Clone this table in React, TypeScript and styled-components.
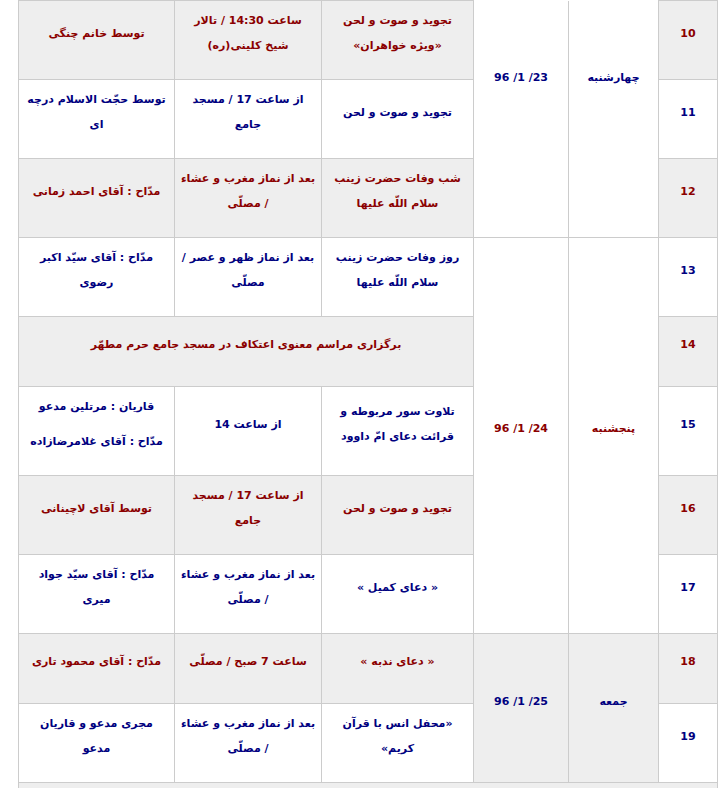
import React from 'react';
import styled, { createGlobalStyle } from 'styled-components';

const GlobalStyle = createGlobalStyle`
  html, body {
    margin: 0;
    padding: 0;
    background: #ffffff;
  }
  body {
    font-family: "DejaVu Sans", sans-serif;
  }
`;

type Tone = 'red' | 'blue';

const Page = styled.div`
  padding: 0 1px 0 18px;
`;

const Table = styled.table`
  width: 699px;
  table-layout: fixed;
  border-collapse: collapse;
  direction: rtl;
  font-family: "DejaVu Sans", Tahoma, sans-serif;
  font-size: 11px;
  font-weight: bold;
`;

const Row = styled.tr`
  height: 70px;
`;

const Cell = styled.td<{ $shade: boolean; $tone: Tone; $carried?: boolean }>`
  border: 1px solid #cccccc;
  ${(p) => (p.$carried ? 'border-top: none;' : '')}
  padding: 7px 4px ${(p) => (p.$carried ? '75px' : '7px')};
  text-align: center;
  vertical-align: middle;
  line-height: 25px;
  white-space: nowrap;
  background: ${(p) => (p.$shade ? '#eeeeee' : '#ffffff')};
  color: ${(p) => (p.$tone === 'red' ? '#8b0000' : '#000080')};
`;

const Para = styled.p<{ $gap?: number }>`
  margin: 0 0 ${(p) => p.$gap ?? 14}px;
`;

const Num = styled.span`
  direction: ltr;
  unicode-bidi: isolate;
  font-size: 11px;
`;

type Lines = string[][];

interface Item {
  no: number;
  program: Lines;
  time?: Lines;
  speaker?: Lines;
  wide?: boolean;
}

interface Group {
  day: string;
  date: string;
  shade: boolean;
  tone: Tone;
  carried?: boolean;
  items: Item[];
}

const groups: Group[] = [
  {
    day: 'چهارشنبه',
    date: '96 /1 /23',
    shade: false,
    tone: 'blue',
    carried: true,
    items: [
      {
        no: 10,
        program: [['تجوید و صوت و لحن', '«ویژه خواهران»']],
        time: [['ساعت 14:30 / تالار', 'شیخ کلینی(ره)']],
        speaker: [['توسط خانم چنگی']],
      },
      {
        no: 11,
        program: [['تجوید و صوت و لحن']],
        time: [['از ساعت 17 / مسجد', 'جامع']],
        speaker: [['توسط حجّت الاسلام درچه', 'ای']],
      },
      {
        no: 12,
        program: [['شب وفات حضرت زینب', 'سلام اللّه علیها']],
        time: [['بعد از نماز مغرب و عشاء', '/ مصلّی']],
        speaker: [['مدّاح : آقای احمد زمانی']],
      },
    ],
  },
  {
    day: 'پنجشنبه',
    date: '96 /1 /24',
    shade: false,
    tone: 'red',
    items: [
      {
        no: 13,
        program: [['روز وفات حضرت زینب', 'سلام اللّه علیها']],
        time: [['بعد از نماز ظهر و عصر /', 'مصلّی']],
        speaker: [['مدّاح : آقای سیّد اکبر', 'رضوی']],
      },
      {
        no: 14,
        wide: true,
        program: [['برگزاری مراسم معنوی اعتکاف در مسجد جامع حرم مطهّر']],
      },
      {
        no: 15,
        program: [['تلاوت سور مربوطه و', 'قرائت دعای امّ داوود']],
        time: [['از ساعت 14']],
        speaker: [['قاریان : مرتلین مدعو'], ['مدّاح : آقای غلامرضازاده']],
      },
      {
        no: 16,
        program: [['تجوید و صوت و لحن']],
        time: [['از ساعت 17 / مسجد', 'جامع']],
        speaker: [['توسط آقای لاچینانی']],
      },
      {
        no: 17,
        program: [['« دعای کمیل »']],
        time: [['بعد از نماز مغرب و عشاء', '/ مصلّی']],
        speaker: [['مدّاح : آقای سیّد جواد', 'میری']],
      },
    ],
  },
  {
    day: 'جمعه',
    date: '96 /1 /25',
    shade: true,
    tone: 'blue',
    items: [
      {
        no: 18,
        program: [['« دعای ندبه »']],
        time: [['ساعت 7 صبح / مصلّی']],
        speaker: [['مدّاح : آقای محمود تاری']],
      },
      {
        no: 19,
        program: [['«محفل انس با قرآن', 'کریم»']],
        time: [['بعد از نماز مغرب و عشاء', '/ مصلّی']],
        speaker: [['مجری مدعو و قاریان', 'مدعو']],
      },
    ],
  },
];

const Content = ({ lines }: { lines: Lines }) => (
  <>
    {lines.map((para, i) => (
      <Para key={i} $gap={i < lines.length - 1 ? 10 : 14}>
        {para.map((line, j) => (
          <React.Fragment key={j}>
            {j > 0 && <br />}
            {line}
          </React.Fragment>
        ))}
      </Para>
    ))}
  </>
);

const App = () => {
  return (
    <Page>
      <GlobalStyle />
      <Table>
        <colgroup>
          <col style={{ width: 59 }} />
          <col style={{ width: 90 }} />
          <col style={{ width: 95 }} />
          <col style={{ width: 152 }} />
          <col style={{ width: 147 }} />
          <col style={{ width: 156 }} />
        </colgroup>
        <tbody>
          {groups.map((group) =>
            group.items.map((item, idx) => {
              const shade = item.no % 2 === 0;
              const tone: Tone = shade ? 'red' : 'blue';
              return (
                <Row key={item.no}>
                  <Cell $shade={shade} $tone={tone}>
                    <Para>
                      <Num>{item.no}</Num>
                    </Para>
                  </Cell>
                  {idx === 0 && (
                    <>
                      <Cell
                        rowSpan={group.items.length}
                        $shade={group.shade}
                        $tone={group.tone}
                        $carried={group.carried}
                      >
                        <Para>{group.day}</Para>
                      </Cell>
                      <Cell
                        rowSpan={group.items.length}
                        $shade={group.shade}
                        $tone={group.tone}
                        $carried={group.carried}
                      >
                        <Para>
                          <Num>{group.date}</Num>
                        </Para>
                      </Cell>
                    </>
                  )}
                  {item.wide ? (
                    <Cell colSpan={3} $shade={shade} $tone={tone}>
                      <Content lines={item.program} />
                    </Cell>
                  ) : (
                    <>
                      <Cell $shade={shade} $tone={tone}>
                        <Content lines={item.program} />
                      </Cell>
                      <Cell $shade={shade} $tone={tone}>
                        <Content lines={item.time ?? []} />
                      </Cell>
                      <Cell $shade={shade} $tone={tone}>
                        <Content lines={item.speaker ?? []} />
                      </Cell>
                    </>
                  )}
                </Row>
              );
            })
          )}
          <Row>
            <Cell colSpan={6} $shade={true} $tone="red" />
          </Row>
        </tbody>
      </Table>
    </Page>
  );
};

export default App;
